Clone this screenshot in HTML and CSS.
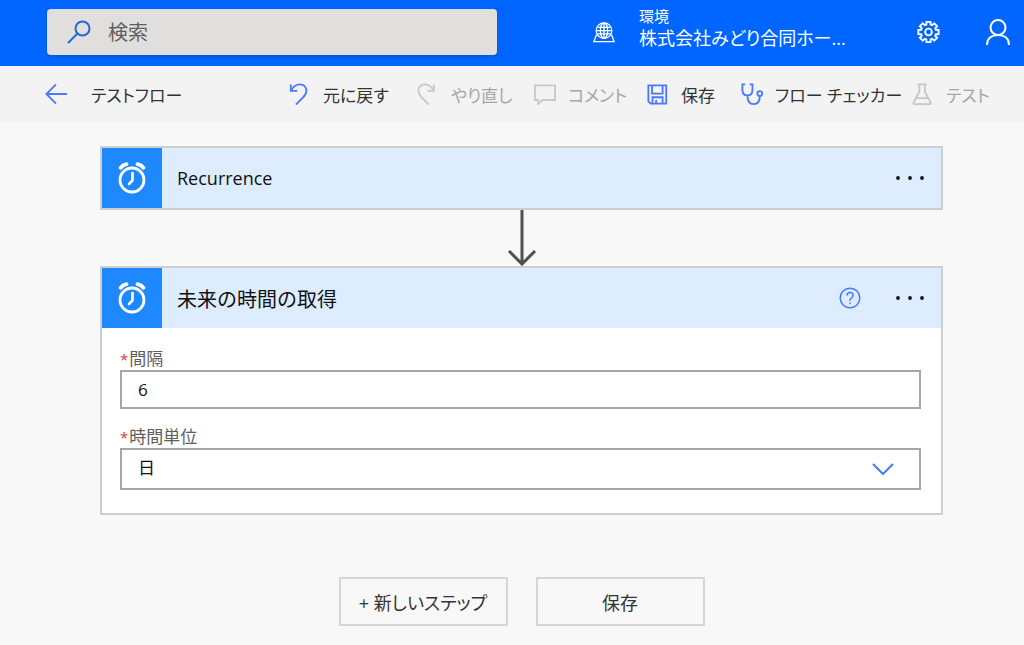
FILE: index.html
```html
<!DOCTYPE html>
<html lang="ja">
<head>
<meta charset="utf-8">
<meta name="viewport" content="width=device-width, initial-scale=1">
<title>テストフロー</title>
<link rel="stylesheet" href="styles.css">
</head>
<body>
<svg class="sprite" aria-hidden="true">
  <symbol id="alarm" viewBox="0 0 30 34">
    <circle cx="15" cy="19" r="12" fill="none" stroke="currentColor" stroke-width="2.800"/>
    <path d="M15.500 12v7.500l-3.500 3.500" fill="none" stroke="currentColor" stroke-width="2.600" stroke-linecap="round"/>
    <path d="M3.500 6.800Q5.500 4 9.500 3.200M20.500 3.200Q24.500 4 26.500 6.800" fill="none" stroke="currentColor" stroke-width="3.800" stroke-linecap="round"/>
  </symbol>
  <symbol id="dots" viewBox="0 0 30 6">
    <circle cx="3" cy="3" r="1.900"/><circle cx="15" cy="3" r="1.900"/><circle cx="27" cy="3" r="1.900"/>
  </symbol>
</svg>

<header class="header">
  <label class="search">
    <svg class="search-icon" viewBox="0 0 24 24"><circle cx="15.500" cy="8.500" r="7"/><path d="M10.500 13.500L1 23"/></svg>
    <input class="search-input" type="search" placeholder="検索" aria-label="検索">
  </label>
  <button class="environment" type="button">
    <svg class="header-icon" viewBox="0 0 24 24"><circle cx="12" cy="10.500" r="8.500"/><ellipse cx="12" cy="10.500" rx="4" ry="8.500"/><path d="M5 7h14M3.500 10.500h17M5 14h14M12 2v17M3.800 15L1 22.500h22L20.200 15"/></svg>
    <span class="environment-text">
      <span class="environment-label">環境</span>
      <span class="environment-name">株式会社みどり合同ホー...</span>
    </span>
  </button>
  <div class="header-actions">
    <button class="icon-button" type="button" aria-label="設定">
      <svg class="header-icon gear" viewBox="0 0 24 24"><path d="M22.590 9.890L22.590 14.110L19.730 14.280L19.080 15.860L20.980 18.000L18.000 20.980L15.860 19.080L14.280 19.730L14.110 22.590L9.890 22.590L9.720 19.730L8.140 19.080L6.000 20.980L3.020 18.000L4.920 15.860L4.270 14.280L1.410 14.110L1.410 9.890L4.270 9.720L4.920 8.140L3.020 6.000L6.000 3.020L8.140 4.920L9.720 4.270L9.890 1.410L14.110 1.410L14.280 4.270L15.860 4.920L18.000 3.020L20.980 6.000L19.080 8.140L19.730 9.720Z"/><circle cx="12" cy="12" r="3.500"/></svg>
    </button>
    <button class="icon-button" type="button" aria-label="アカウント">
      <svg class="person" viewBox="0 0 24 26"><circle cx="12" cy="8.500" r="7.500"/><path d="M1 26C1 19 6 16 12 16s11 3 11 10"/></svg>
    </button>
  </div>
</header>

<div class="toolbar">
  <button class="icon-button back" type="button" aria-label="戻る">
    <svg class="tool-icon" viewBox="0 0 24 24"><path d="M24 12H1.500M12 1.500L1.500 12 12 22.500"/></svg>
  </button>
  <h1 class="flow-name">テストフロー</h1>
  <div class="commands">
    <button class="command" type="button"><svg class="tool-icon" viewBox="0 0 24 24"><path d="M2 1.500v7h7M2 8.500C4.500 4 8.500 1.500 12 1.500c4 0 7 3 7 7 0 2.500-1 4.500-3 6.500L7.500 23.500"/></svg>元に戻す</button>
    <button class="command" type="button" disabled><svg class="tool-icon" viewBox="0 0 24 24"><path d="M18.500 1.500v7h-7M18.500 8.500C16 4 12 1.500 8.500 1.500c-4 0-7 3-7 7 0 2.500 1 4.500 3 6.500l8.500 8.500"/></svg>やり直し</button>
    <button class="command" type="button" disabled><svg class="tool-icon" viewBox="0 0 24 24"><path d="M1 2.500h22v16H9.500L4.500 23v-4.500H1z"/></svg>コメント</button>
    <button class="command" type="button"><svg class="tool-icon" viewBox="0 0 24 24"><path d="M1.500 2.500h19.500v20H4L1.500 20zM5.500 2.500v9H17v-9M6 22.500v-7h11v7M10 22.500v-4"/></svg>保存</button>
    <button class="command" type="button"><svg class="tool-icon" viewBox="0 0 24 24"><path d="M4.500 1.500H1.500v5.500c0 4 2 6.500 5.500 6.500s5.500-2.500 5.500-6.500V1.500h-3M7 13.500c0 6 2.500 9.500 7 9.500s6.500-3 6.500-8.500"/><circle cx="20.500" cy="11.500" r="2.700"/></svg>フロー チェッカー</button>
    <button class="command" type="button" disabled><svg class="tool-icon" viewBox="0 0 24 24"><path d="M6 1.500h10M8 1.500v8L1.500 21.500q-.5 1.500 1 1.500h17q1.500 0 1-1.500L14 9.500v-8M5 16.500h12"/></svg>テスト</button>
  </div>
</div>

<main class="canvas">
  <section class="card">
    <div class="card-header">
      <span class="card-icon"><svg class="alarm"><use href="#alarm"/></svg></span>
      <h2 class="card-title" lang="en">Recurrence</h2>
      <button class="icon-button more" type="button" aria-label="メニュー"><svg class="dots"><use href="#dots"/></svg></button>
    </div>
  </section>

  <svg class="arrow" viewBox="0 0 30 56"><path d="M15 0v54M2 41l13 13 13-13"/></svg>

  <section class="card">
    <div class="card-header">
      <span class="card-icon"><svg class="alarm"><use href="#alarm"/></svg></span>
      <h2 class="card-title">未来の時間の取得</h2>
      <button class="icon-button" type="button" aria-label="ヘルプ"><svg class="help" viewBox="0 0 22 22"><circle cx="11" cy="11" r="9.800"/><path d="M8 8.500q0-3 3-3t3 2.800q0 1.500-1.500 2.700T11 13.300V14M11 15.500v1.500"/></svg></button>
      <button class="icon-button more" type="button" aria-label="メニュー"><svg class="dots"><use href="#dots"/></svg></button>
    </div>
    <form class="card-body">
      <div class="field">
        <label class="field-label" for="interval"><span class="required">*</span>間隔</label>
        <input class="control" id="interval" type="text" value="6">
      </div>
      <div class="field">
        <label class="field-label" for="unit"><span class="required">*</span>時間単位</label>
        <div class="select-box">
          <select class="control unit" id="unit"><option>日</option></select>
          <svg class="chevron" viewBox="0 0 22 12"><path d="M1 1l10 10L21 1"/></svg>
        </div>
      </div>
    </form>
  </section>

  <div class="actions">
    <button class="action" type="button">+ 新しいステップ</button>
    <button class="action" type="button">保存</button>
  </div>
</main>
</body>
</html>
```

FILE: styles.css
```css
* {
  box-sizing: border-box;
}

body {
  margin: 0;
  background: #f8f8f8;
  color: #333;
  font-family: "Open Sans", "Noto Sans CJK JP", sans-serif;
  font-size: 18px;
  font-feature-settings: "palt";
}

button,
input,
select {
  font: inherit;
  font-feature-settings: inherit;
  color: inherit;
}

button {
  padding: 0;
  border: 0;
  background: none;
}

h1,
h2 {
  margin: 0;
  font-size: inherit;
  font-weight: 400;
}

svg {
  display: block;
  flex: none;
  fill: none;
  stroke: currentColor;
}

.sprite {
  display: none;
}

.header {
  display: flex;
  align-items: center;
  height: 66px;
  padding: 0 14px 2px 47px;
  background: #0066ff;
  color: #fff;
}

.search {
  display: flex;
  align-items: center;
  flex: 0 1 450px;
  height: 46px;
  padding: 0 20px;
  gap: 17px;
  border-radius: 4px;
  background: #e1dfdd;
  box-shadow: 0 1px 3px #0050c8;
  font-size: 20px;
}

.search-icon {
  width: 24px;
  height: 24px;
  color: #2268d8;
  stroke-width: 2;
}

.search-input {
  flex: 1;
  min-width: 0;
  padding: 0;
  border: 0;
  outline: 0;
  background: none;
}

.search-input::placeholder {
  color: #605e5c;
  opacity: 1;
}

.environment {
  display: flex;
  align-items: center;
  gap: 24px;
  margin-left: 96px;
  text-align: left;
}

.environment-text {
  display: flex;
  flex-direction: column;
  padding-bottom: 6px;
  white-space: nowrap;
}

.environment-label {
  font-size: 15px;
  line-height: 18px;
}

.environment-name {
  line-height: 26px;
}

.header-icon {
  width: 22px;
  height: 24px;
  stroke-width: 1.5;
}

.header-actions {
  display: flex;
  align-items: center;
  gap: 46px;
  margin-left: auto;
}

.gear {
  width: 23px;
  stroke-width: 2;
}

.person {
  width: 24px;
  height: 26px;
  stroke-width: 2;
}

.toolbar {
  display: flex;
  align-items: center;
  height: 56px;
  padding: 0 32px 0 45px;
  background: #f3f3f3;
  font-size: 17px;
}

.tool-icon {
  width: 22px;
  height: 22px;
  stroke-width: 2;
  color: #4a78ff;
}

.flow-name {
  flex: 1;
  margin-left: 24px;
  white-space: nowrap;
}

.commands {
  display: grid;
  grid-template-columns: 128px 117px 113px 94px 171px 80px;
}

.command {
  display: flex;
  align-items: center;
  gap: 12px;
  white-space: nowrap;
}

.command:disabled {
  color: #a6a6a6;
}

.command:disabled .tool-icon {
  color: #c8c8c8;
}

.canvas {
  display: flex;
  flex-direction: column;
  padding: 24px 81px 19px 100px;
}

.card {
  border: 2px solid #cecece;
  background: #fff;
}

.card-header {
  display: flex;
  align-items: center;
  height: 60px;
  padding-right: 16px;
  background: #deecff;
  color: #111;
}

.card-icon {
  display: flex;
  align-items: center;
  justify-content: center;
  align-self: stretch;
  width: 60px;
  background: #1e88ff;
  color: #fff;
}

.alarm {
  width: 30px;
  height: 34px;
  stroke: none;
}

.card-title {
  flex: 1;
  margin-left: 15px;
  font-size: 20px;
  font-feature-settings: normal;
}

.card-title:lang(en) {
  font-size: 18px;
}

.help {
  width: 22px;
  height: 22px;
  margin-right: 34px;
  color: #4a78ff;
  stroke-width: 1.5;
}

.dots {
  width: 30px;
  height: 6px;
  fill: currentColor;
  stroke: none;
}

.arrow {
  align-self: center;
  width: 30px;
  height: 56px;
  color: #505050;
  stroke-width: 3;
}

.card-body {
  display: flex;
  flex-direction: column;
  gap: 16px;
  padding: 19px 20px 23px 18px;
}

.field-label {
  display: block;
  color: #605e5c;
  font-size: 17px;
  line-height: 23px;
}

.required {
  margin-right: 1px;
  color: #e0343c;
  font-size: 15px;
  line-height: 1;
}

.control {
  display: block;
  width: 100%;
  height: 39px;
  padding: 0 16px;
  border: 2px solid #a6a6a6;
  border-radius: 0;
  background: #fff;
  color: #111;
  font-size: 17px;
}

.select-box {
  display: grid;
  align-items: center;
}

.select-box > * {
  grid-area: 1 / 1;
}

.unit {
  height: 42px;
  padding-bottom: 3px;
  appearance: none;
}

.chevron {
  justify-self: end;
  width: 22px;
  height: 12px;
  margin-right: 27px;
  color: #3a7cff;
  stroke-width: 2;
  pointer-events: none;
}

.actions {
  display: flex;
  justify-content: center;
  gap: 28px;
  margin-top: 62px;
}

.action {
  width: 169px;
  height: 49px;
  border: 2px solid #d6d6d6;
}
```
